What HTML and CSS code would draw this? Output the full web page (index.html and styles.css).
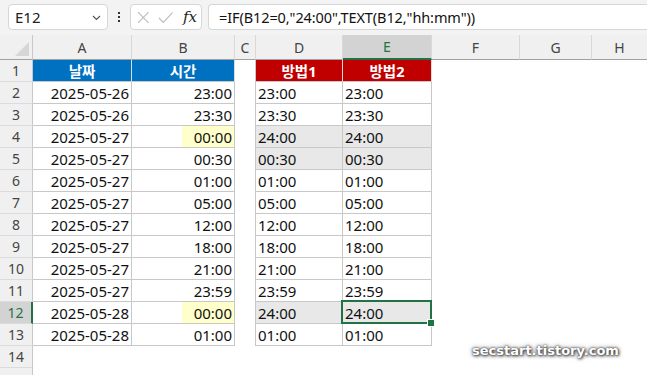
FILE: index.html
```html
<!DOCTYPE html>
<html lang="ko">
<head>
<meta charset="utf-8">
<title>Excel</title>
<link rel="stylesheet" href="styles.css">
</head>
<body>
<div class="app">
  <div class="toolbar">
    <div class="namebox"><span class="nb-text">E12</span>
      <svg class="chev" width="9" height="6" viewBox="0 0 9 6"><path d="M1 1 L4.5 4.5 L8 1" fill="none" stroke="#555" stroke-width="1.2"/></svg>
    </div>
    <div class="dots"><i></i><i></i><i></i></div>
    <div class="fxbox">
      <svg width="13" height="13" viewBox="0 0 13 13"><path d="M1 1 L12 12 M12 1 L1 12" stroke="#bcbcbc" stroke-width="1.2" fill="none"/></svg>
      <svg width="16" height="13" viewBox="0 0 16 13"><path d="M1 7 L5.5 11.5 L15 1.5" stroke="#bcbcbc" stroke-width="1.2" fill="none"/></svg>
      <span class="fx">fx</span>
    </div>
    <div class="formula">=IF(B12=0,"24:00",TEXT(B12,"hh:mm"))</div>
  </div>
  <div class="sheet">
    <div class="ch corner"><span class="tri"></span></div>
    <div class="ch">A</div><div class="ch">B</div><div class="ch">C</div><div class="ch">D</div><div class="ch sel">E</div><div class="ch">F</div><div class="ch">G</div><div class="ch last">H</div>

    <div class="rh">1</div><div class="c hd blue">날짜</div><div class="c hd blue">시간</div><div class="c gap"></div><div class="c hd red">방법1</div><div class="c hd red">방법2</div><div class="e"></div><div class="e"></div><div class="e"></div>

    <div class="rh">2</div><div class="c r">2025-05-26</div><div class="c r">23:00</div><div class="c gap"></div><div class="c l">23:00</div><div class="c l">23:00</div><div class="e"></div><div class="e"></div><div class="e"></div>
    <div class="rh">3</div><div class="c r">2025-05-26</div><div class="c r">23:30</div><div class="c gap"></div><div class="c l">23:30</div><div class="c l">23:30</div><div class="e"></div><div class="e"></div><div class="e"></div>
    <div class="rh">4</div><div class="c r">2025-05-27</div><div class="c r yel">00:00</div><div class="c gap"></div><div class="c l g">24:00</div><div class="c l g">24:00</div><div class="e"></div><div class="e"></div><div class="e"></div>
    <div class="rh">5</div><div class="c r">2025-05-27</div><div class="c r">00:30</div><div class="c gap"></div><div class="c l g">00:30</div><div class="c l g">00:30</div><div class="e"></div><div class="e"></div><div class="e"></div>
    <div class="rh">6</div><div class="c r">2025-05-27</div><div class="c r">01:00</div><div class="c gap"></div><div class="c l">01:00</div><div class="c l">01:00</div><div class="e"></div><div class="e"></div><div class="e"></div>
    <div class="rh">7</div><div class="c r">2025-05-27</div><div class="c r">05:00</div><div class="c gap"></div><div class="c l">05:00</div><div class="c l">05:00</div><div class="e"></div><div class="e"></div><div class="e"></div>
    <div class="rh">8</div><div class="c r">2025-05-27</div><div class="c r">12:00</div><div class="c gap"></div><div class="c l">12:00</div><div class="c l">12:00</div><div class="e"></div><div class="e"></div><div class="e"></div>
    <div class="rh">9</div><div class="c r">2025-05-27</div><div class="c r">18:00</div><div class="c gap"></div><div class="c l">18:00</div><div class="c l">18:00</div><div class="e"></div><div class="e"></div><div class="e"></div>
    <div class="rh">10</div><div class="c r">2025-05-27</div><div class="c r">21:00</div><div class="c gap"></div><div class="c l">21:00</div><div class="c l">21:00</div><div class="e"></div><div class="e"></div><div class="e"></div>
    <div class="rh">11</div><div class="c r">2025-05-27</div><div class="c r">23:59</div><div class="c gap"></div><div class="c l">23:59</div><div class="c l">23:59</div><div class="e"></div><div class="e"></div><div class="e"></div>
    <div class="rh sel">12</div><div class="c r">2025-05-28</div><div class="c r yel">00:00</div><div class="c gap"></div><div class="c l g">24:00</div><div class="c l g active">24:00<span class="handle"></span></div><div class="e"></div><div class="e"></div><div class="e"></div>
    <div class="rh">13</div><div class="c r">2025-05-28</div><div class="c r">01:00</div><div class="c gap"></div><div class="c l">01:00</div><div class="c l">01:00</div><div class="e"></div><div class="e"></div><div class="e"></div>
    <div class="rh">14</div><div class="e"></div><div class="e"></div><div class="e"></div><div class="e"></div><div class="e"></div><div class="e"></div><div class="e"></div><div class="e"></div>
    <div class="rh"></div><div class="e"></div><div class="e"></div><div class="e"></div><div class="e"></div><div class="e"></div><div class="e"></div><div class="e"></div><div class="e"></div>
  </div>
  <div class="watermark">secstart.tistory.com</div>
</div>
</body>
</html>
```
FILE: styles.css
```css
html, body { margin: 0; padding: 0; }
body { width: 647px; height: 375px; overflow: hidden; background: #fff; font-family: "Noto Sans", "Noto Sans CJK KR", sans-serif; }
.app { position: relative; width: 647px; height: 375px; overflow: hidden; }

.toolbar { height: 35px; background: #f3f3f3; display: flex; align-items: flex-start; padding: 4px 0 0 8px; box-sizing: border-box; }
.namebox { width: 100px; height: 26px; box-sizing: border-box; background: #fff; border: 1px solid #d6d6d6; border-radius: 4px; display: flex; align-items: center; justify-content: space-between; padding: 0 6px 0 6px; }
.nb-text { font-size: 15px; color: #222; }
.chev { margin-top: 1px; }
.dots { width: 22px; height: 26px; display: flex; flex-direction: column; align-items: center; justify-content: center; gap: 2px; }
.dots i { width: 2px; height: 2px; background: #333; display: block; }
.fxbox { width: 72px; height: 26px; box-sizing: border-box; background: #fff; border: 1px solid #d6d6d6; border-radius: 4px; display: flex; align-items: center; padding: 0 4px 0 6px; gap: 8px; }
.fx { font-family: "DejaVu Serif", "Liberation Serif", serif; font-style: italic; font-size: 15px; color: #222; margin-left: 2px; }
.formula { margin-left: 6px; flex: 1; height: 26px; box-sizing: border-box; background: #fff; border: 1px solid #d6d6d6; border-right: none; border-radius: 4px 0 0 4px; font-size: 14.5px; letter-spacing: -0.1px; color: #111; padding-left: 10px; line-height: 24px; }

.sheet { display: grid; grid-template-columns: 33px 99px 103px 21px 87px 89px 88px 72px 55px; grid-template-rows: 25px repeat(15, 22px); }
.ch { background: #f0f0f0; border-right: 1px solid #d9d9d9; border-bottom: 1px solid #a0a0a0; font-size: 14px; color: #444; display: flex; align-items: center; justify-content: center; box-sizing: border-box; }
.ch.last { border-right: none; }
.ch.corner { position: relative; border-right: 1px solid #c8c8c8; }
.tri { position: absolute; right: 3px; bottom: 3px; width: 0; height: 0; border-left: 14px solid transparent; border-bottom: 14px solid #d6d6d6; }
.ch.sel { background: #d3d3d3; color: #217346; border-bottom: 2px solid #217346; }
.rh { background: #f0f0f0; border-right: 1px solid #c8c8c8; border-bottom: 1px solid #dcdcdc; font-size: 14px; color: #444; display: flex; align-items: center; justify-content: center; box-sizing: border-box; }
.rh.sel { background: #d3d3d3; color: #217346; border-right: 2px solid #217346; }

.c { box-sizing: border-box; border-right: 1px solid #c8c8c8; border-bottom: 1px solid #c8c8c8; font-size: 15px; color: #111; display: flex; align-items: center; white-space: nowrap; }
.c.r { justify-content: flex-end; padding-right: 2px; }
.c.l { padding-left: 2px; }
.c.gap { border-bottom: none; }
.c.hd { color: #fff; font-weight: bold; font-size: 14.5px; justify-content: center; border-right-color: #dcdcdc; border-bottom-color: #c8c8c8; }
.c.blue { background: #0070c0; }
.c.red { background: #c00000; }
.c.g { background: #e8e8e8; }
.c.yel { background: linear-gradient(to right, #fff 50px, #ffffcc 50px); }
.c.active { position: relative; }
.c.active::after { content: ""; position: absolute; left: -2px; top: -2px; right: -1px; bottom: -1px; border: 2px solid #217346; }
.handle { position: absolute; right: -4px; bottom: -4px; width: 6px; height: 6px; background: #217346; border: 1px solid #fff; z-index: 2; }

.watermark { position: absolute; left: 472px; top: 343px; font-family: "DejaVu Sans", sans-serif; font-weight: bold; font-size: 13px; color: #fff; text-shadow: 0 0 2px #333, 1px 1px 3px #444, 0 0 5px #666; }
```
